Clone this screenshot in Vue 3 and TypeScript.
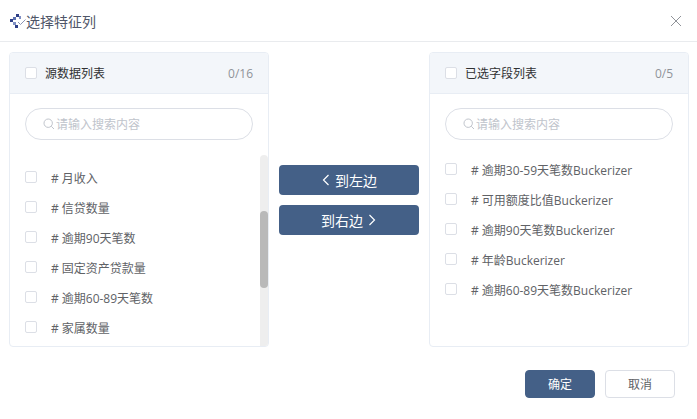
<script setup lang="ts">
import { onMounted, ref } from 'vue';

const sourceList = ref<HTMLElement | null>(null);

const sourceItems = [
  '逾期30-59天笔数',
  '可用额度比值',
  '年龄',
  '负债率',
  '用户编号',
  '月收入',
  '信贷数量',
  '逾期90天笔数',
  '固定资产贷款量',
  '逾期60-89天笔数',
  '家属数量',
  '好坏客户',
  '性别',
  '地区',
  '学历',
  '婚姻状况'
];

const selectedItems = [
  '逾期30-59天笔数Buckerizer',
  '可用额度比值Buckerizer',
  '逾期90天笔数Buckerizer',
  '年龄Buckerizer',
  '逾期60-89天笔数Buckerizer'
];

onMounted(() => {
  if (sourceList.value) sourceList.value.scrollTop = 142;
});
</script>

<template>
  <div class="dialog">
    <header class="dialog-header">
      <div class="title">
        <svg class="title-icon" width="16" height="16" viewBox="0 0 16 16">
          <rect x="6" y="1" width="3" height="3" fill="#2f3f86" />
          <rect x="9" y="3" width="2" height="3" fill="#7f8fc4" />
          <rect x="3" y="4" width="3" height="3" fill="#5a6fb0" />
          <rect x="0" y="6" width="3" height="3" fill="#2f3f86" />
          <rect x="3" y="9" width="3" height="3" fill="#7f8fc4" />
          <rect x="5" y="12" width="3" height="3" fill="#2f3f86" />
          <path d="M8 9l2.5 2.5L15.5 6.5" fill="none" stroke="#8c94b4" stroke-width="1" />
        </svg>
        <span>选择特征列</span>
      </div>
      <svg class="close" width="12" height="12" viewBox="0 0 12 12">
        <path d="M1 1l10 10M11 1L1 11" stroke="#909399" stroke-width="1" fill="none" />
      </svg>
    </header>

    <div class="transfer">
      <section class="panel">
        <div class="panel-head">
          <span class="check"></span>
          <span class="panel-title">源数据列表</span>
          <span class="count">0/16</span>
        </div>
        <div class="search-wrap">
          <div class="search">
            <svg width="12" height="12" viewBox="0 0 12 12">
              <circle cx="5.2" cy="5.2" r="4.2" fill="none" stroke="#c0c4cc" stroke-width="1" />
              <path d="M8.3 8.3L11 11" stroke="#c0c4cc" stroke-width="1" />
            </svg>
            <span>请输入搜索内容</span>
          </div>
        </div>
        <div ref="sourceList" class="list scroll">
          <div v-for="item in sourceItems" :key="item" class="row">
            <span class="check"></span>
            <span class="hash">#</span>
            <span>{{ item }}</span>
          </div>
        </div>
        <div class="scrollbar">
          <div class="thumb"></div>
        </div>
      </section>

      <div class="actions">
        <button class="move">
          <svg width="8" height="12" viewBox="0 0 8 12">
            <path d="M7.5 1L2.5 6l5 5" fill="none" stroke="#fff" stroke-width="1.2" />
          </svg>
          到左边
        </button>
        <button class="move">
          到右边
          <svg width="8" height="12" viewBox="0 0 8 12">
            <path d="M.5 1l5 5-5 5" fill="none" stroke="#fff" stroke-width="1.2" />
          </svg>
        </button>
      </div>

      <section class="panel">
        <div class="panel-head">
          <span class="check"></span>
          <span class="panel-title">已选字段列表</span>
          <span class="count">0/5</span>
        </div>
        <div class="search-wrap">
          <div class="search">
            <svg width="12" height="12" viewBox="0 0 12 12">
              <circle cx="5.2" cy="5.2" r="4.2" fill="none" stroke="#c0c4cc" stroke-width="1" />
              <path d="M8.3 8.3L11 11" stroke="#c0c4cc" stroke-width="1" />
            </svg>
            <span>请输入搜索内容</span>
          </div>
        </div>
        <div class="list">
          <div v-for="item in selectedItems" :key="item" class="row">
            <span class="check"></span>
            <span class="hash">#</span>
            <span>{{ item }}</span>
          </div>
        </div>
      </section>
    </div>

    <footer class="dialog-footer">
      <button class="btn primary">确定</button>
      <button class="btn">取消</button>
    </footer>
  </div>
</template>

<style scoped>
.dialog {
  width: 697px;
  height: 419px;
  background: #fff;
  font-family: "Open Sans", "Noto Sans CJK SC", sans-serif;
  font-size: 12px;
  color: #606266;
  overflow: hidden;
}

.dialog-header {
  height: 42px;
  box-sizing: border-box;
  border-bottom: 1px solid #e9ebee;
  display: flex;
  align-items: center;
  justify-content: space-between;
  padding: 0 15px 0 10px;
}

.title {
  display: flex;
  align-items: center;
  font-size: 14px;
  color: #4f5668;
}

.transfer {
  display: flex;
  padding: 10px 8px 0 9px;
  gap: 10px;
}

.panel {
  position: relative;
  width: 260px;
  height: 295px;
  box-sizing: border-box;
  border: 1px solid #e8edf4;
  border-radius: 4px;
  overflow: hidden;
}

.panel-head {
  height: 41px;
  box-sizing: border-box;
  background: #f3f6fa;
  border-bottom: 1px solid #e8edf4;
  display: flex;
  align-items: center;
  padding: 0 15px;
}

.panel-title {
  margin-left: 8px;
  color: #303133;
}

.count {
  margin-left: auto;
  color: #909399;
}

.check {
  width: 12px;
  height: 12px;
  box-sizing: border-box;
  flex: none;
  border: 1px solid #dcdfe6;
  border-radius: 2px;
  background: #fff;
}

.search-wrap {
  height: 61px;
  padding: 14px 15px 0;
  box-sizing: border-box;
}

.search {
  height: 32px;
  box-sizing: border-box;
  border: 1px solid #dcdfe6;
  border-radius: 16px;
  display: flex;
  align-items: center;
  padding-left: 17px;
  gap: 1px;
  color: #c0c4cc;
}

.list {
  height: 192px;
}

.scroll {
  overflow-y: scroll;
  scrollbar-width: none;
}

.scrollbar {
  position: absolute;
  top: 102px;
  right: 0;
  bottom: 0;
  width: 8px;
  background: #eeeeee;
  border-radius: 4px 4px 0 0;
}

.thumb {
  margin-top: 56px;
  height: 77px;
  background: #b9b9b9;
  border-radius: 4px;
}

.row {
  height: 30px;
  display: flex;
  align-items: center;
  padding-left: 15px;
}

.row .check {
  position: relative;
  top: -1px;
  margin-right: 14px;
}

.hash {
  margin-right: 3px;
}

.actions {
  width: 140px;
  padding-top: 113px;
  display: flex;
  flex-direction: column;
  gap: 10px;
}

.move {
  height: 30px;
  border: none;
  border-radius: 4px;
  background: #446087;
  color: #fff;
  font-family: inherit;
  font-size: 14px;
  display: flex;
  align-items: center;
  justify-content: center;
  gap: 6px;
  padding: 0;
}

.dialog-footer {
  display: flex;
  justify-content: flex-end;
  gap: 10px;
  padding: 23px 22px 0 0;
}

.btn {
  width: 70px;
  height: 28px;
  box-sizing: border-box;
  border: 1px solid #dcdfe6;
  border-radius: 4px;
  background: #fff;
  color: #606266;
  font-family: inherit;
  font-size: 12px;
  padding: 0;
}

.btn.primary {
  background: #446087;
  border-color: #446087;
  color: #fff;
}
</style>
